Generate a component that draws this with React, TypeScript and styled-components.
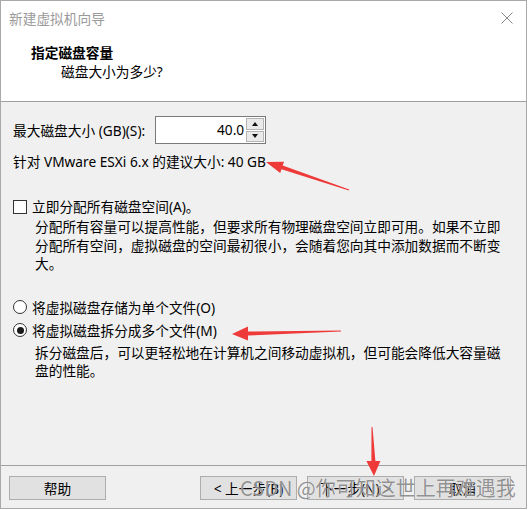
import React from "react";
import styled, { createGlobalStyle } from "styled-components";

const Global = createGlobalStyle`
  html, body { margin: 0; padding: 0; background: #fff; }
  body {
    font-family: "Noto Sans", "Noto Sans CJK SC", sans-serif;
    font-size: 13.7px;
    color: #000;
  }
`;

const Page = styled.div`
  position: relative;
  width: 528px;
  height: 510px;
`;

const Window = styled.div`
  width: 527px;
  height: 509px;
  box-sizing: border-box;
  border: 1px solid #a9a9a9;
  display: flex;
  flex-direction: column;
  background: #f0f0f0;
`;

const TitleBar = styled.div`
  height: 34px;
  flex: none;
  display: flex;
  align-items: center;
  justify-content: space-between;
  padding: 0 13px 0 8px;
  background: #fff;
  color: #9a9a9a;
  line-height: 19px;
`;

const Header = styled.div`
  height: 67px;
  flex: none;
  box-sizing: border-box;
  background: #fff;
  border-bottom: 1px solid #a0a0a0;
  padding: 8px 0 0 30px;
  line-height: 19px;
`;

const HeaderTitle = styled.div`
  font-weight: bold;
`;

const HeaderSub = styled.div`
  padding-left: 30px;
`;

const Body = styled.div`
  flex: 1;
  padding: 14px 0 0 12px;
  line-height: 19px;
`;

const SizeRow = styled.div`
  display: flex;
  align-items: center;
  height: 28px;
`;

const SpinBox = styled.div`
  display: flex;
  width: 111px;
  height: 28px;
  margin-left: 10px;
  box-sizing: border-box;
  border: 1px solid #7a7a7a;
  background: #fff;
`;

const SpinValue = styled.div`
  flex: 1;
  text-align: right;
  padding-right: 2px;
  line-height: 26px;
`;

const SpinButtons = styled.div`
  width: 18px;
  display: flex;
  flex-direction: column;
  gap: 1px;
  padding: 1px 1px 1px 0;
`;

const SpinButton = styled.div`
  flex: 1;
  background: #eaeaea;
  border: 1px solid #b5b5b5;
  display: flex;
  align-items: center;
  justify-content: center;
`;

const Arrow = styled.div<{ $up?: boolean }>`
  width: 0;
  height: 0;
  border-left: 3.5px solid transparent;
  border-right: 3.5px solid transparent;
  ${(p) => (p.$up ? "border-bottom: 4px solid #111;" : "border-top: 4px solid #111;")}
`;

const Recommend = styled.div`
  margin-top: 8px;
`;

const OptionRow = styled.div<{ $top: number }>`
  display: flex;
  align-items: center;
  gap: 5px;
  margin-top: ${(p) => p.$top}px;
  height: ${(p) => (p.$top > 0 ? 19 : 23)}px;
`;

const CheckBox = styled.span`
  width: 14px;
  height: 14px;
  box-sizing: border-box;
  border: 1px solid #333;
  background: #fff;
  flex: none;
`;

const Radio = styled.span<{ $checked?: boolean }>`
  width: 14px;
  height: 14px;
  box-sizing: border-box;
  border: 1px solid #333;
  border-radius: 50%;
  background: #fff;
  flex: none;
  display: flex;
  align-items: center;
  justify-content: center;
  &::after {
    content: "";
    width: 7px;
    height: 7px;
    border-radius: 50%;
    background: ${(p) => (p.$checked ? "#1a1a1a" : "transparent")};
  }
`;

const Description = styled.div`
  width: 470px;
  padding-left: 22px;
  margin-top: 2px;
  line-height: 18.6px;
`;

const RadioGroup = styled.div`
  margin-top: 22px;
`;

const Footer = styled.div`
  height: 43px;
  flex: none;
  box-sizing: border-box;
  border-top: 1px solid #a0a0a0;
  padding: 10px 15px 0 8px;
  display: flex;
  align-items: flex-start;
`;

const Button = styled.div<{ $gapLeft?: number }>`
  width: 97px;
  height: 24px;
  box-sizing: border-box;
  border: 1px solid #adadad;
  background: #e1e1e1;
  display: flex;
  align-items: center;
  justify-content: center;
  margin-left: ${(p) => p.$gapLeft ?? 0}px;
  line-height: 19px;
`;

const Spacer = styled.div`
  flex: 1;
`;

const Overlay = styled.svg`
  position: absolute;
  left: 0;
  top: 0;
  pointer-events: none;
`;

const Watermark = styled.div`
  position: absolute;
  left: 240px;
  top: 476px;
  font-family: "Noto Sans CJK SC", sans-serif;
  font-size: 20px;
  line-height: 24px;
  color: rgba(105, 105, 105, 0.72);
  text-shadow: 0 0 1px rgba(255, 255, 255, 0.9);
  white-space: nowrap;
  pointer-events: none;
`;

export default function App() {
  return (
    <Page>
      <Global />
      <Window>
        <TitleBar>
          <span>新建虚拟机向导</span>
          <svg width="12" height="12" viewBox="0 0 12 12">
            <path d="M0.5 0.5 L11.5 11.5 M11.5 0.5 L0.5 11.5" stroke="#8a8a8a" strokeWidth="1" />
          </svg>
        </TitleBar>
        <Header>
          <HeaderTitle>指定磁盘容量</HeaderTitle>
          <HeaderSub>磁盘大小为多少?</HeaderSub>
        </Header>
        <Body>
          <SizeRow>
            <span>最大磁盘大小 (GB)(S):</span>
            <SpinBox>
              <SpinValue>40.0</SpinValue>
              <SpinButtons>
                <SpinButton>
                  <Arrow $up />
                </SpinButton>
                <SpinButton>
                  <Arrow />
                </SpinButton>
              </SpinButtons>
            </SpinBox>
          </SizeRow>
          <Recommend>针对 VMware ESXi 6.x 的建议大小: 40 GB</Recommend>
          <OptionRow $top={26}>
            <CheckBox />
            <span>立即分配所有磁盘空间(A)。</span>
          </OptionRow>
          <Description>
            分配所有容量可以提高性能，但要求所有物理磁盘空间立即可用。如果不立即分配所有空间，虚拟磁盘的空间最初很小，会随着您向其中添加数据而不断变大。
          </Description>
          <RadioGroup>
            <OptionRow $top={0}>
              <Radio />
              <span>将虚拟磁盘存储为单个文件(O)</span>
            </OptionRow>
            <OptionRow $top={0}>
              <Radio $checked />
              <span>将虚拟磁盘拆分成多个文件(M)</span>
            </OptionRow>
            <Description>
              拆分磁盘后，可以更轻松地在计算机之间移动虚拟机，但可能会降低大容量磁盘的性能。
            </Description>
          </RadioGroup>
        </Body>
        <Footer>
          <Button>帮助</Button>
          <Spacer />
          <Button>&lt; 上一步(B)</Button>
          <Button $gapLeft={10}>下一步(N) &gt;</Button>
          <Button $gapLeft={10}>取消</Button>
        </Footer>
      </Window>
      <Watermark>CSDN @你可知这世上再难遇我</Watermark>
      <Overlay width="528" height="510" viewBox="0 0 528 510">
        <polygon
          fill="#ef3a3a"
          points="349.2,189.5 282.7,165.5 284.0,161.7 266,162 280.2,173.1 281.5,169.3 348.8,190.5"
        />
        <polygon
          fill="#ef3a3a"
          points="341,330.5 248,331.6 248,326.6 232,334 248,340.6 248,335.6 341,331.5"
        />
        <polygon
          fill="#ef3a3a"
          points="371.5,427 371.4,461 366.4,461 374,476 380.4,461 375.4,461 372.5,427"
        />
      </Overlay>
    </Page>
  );
}
